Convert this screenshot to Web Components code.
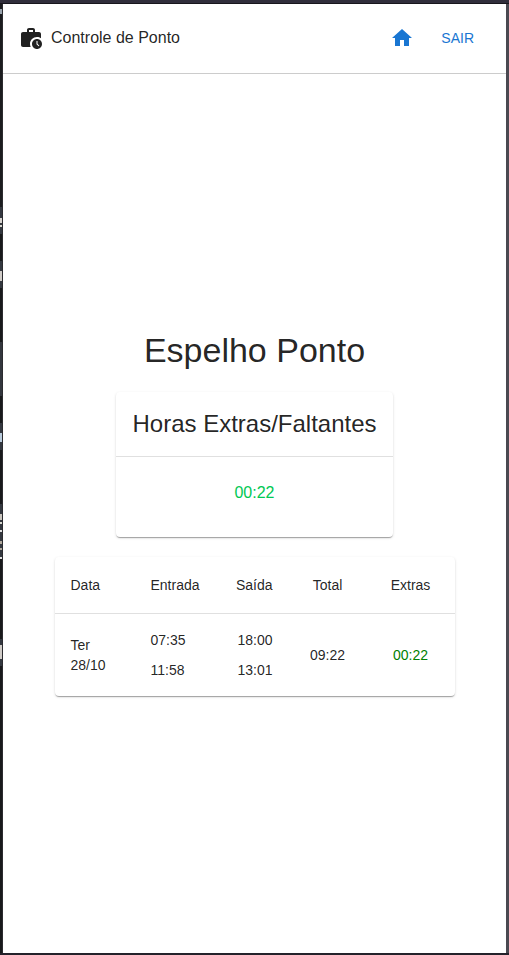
<!DOCTYPE html>
<html lang="pt-BR">
<head>
<meta charset="utf-8">
<meta name="viewport" content="width=device-width, initial-scale=1">
<title>Controle de Ponto</title>
<style>
  body {
    margin: 0;
    font-family: "Liberation Sans", Arial, sans-serif;
    font-size: 16px;
    line-height: 24px;
    color: rgba(0, 0, 0, 0.87);
  }
</style>
</head>
<body>
<window-frame>
  <app-header slot="header" heading="Controle de Ponto"></app-header>
  <time-sheet>
    <hours-card heading="Horas Extras/Faltantes">00:22</hours-card>
    <hours-table></hours-table>
  </time-sheet>
</window-frame>

<script>
const define = (name, markup, setup) => {
  const template = document.createElement("template");
  template.innerHTML = markup;
  customElements.define(name, class extends HTMLElement {
    constructor() {
      super();
      this.attachShadow({ mode: "open" }).append(template.content.cloneNode(true));
    }
    connectedCallback() {
      if (setup) setup(this, this.shadowRoot);
    }
  });
};

const setHeading = (host, root) => {
  root.querySelector(".heading").textContent = host.getAttribute("heading");
};

/* Paper surface shared by the summary and the table */
define("paper-surface", `
  <style>
    :host {
      display: block;
      box-sizing: border-box;
      background: #fff;
      border-radius: 4px;
      overflow: hidden;
      box-shadow: 0 2px 1px -1px rgba(0,0,0,.2), 0 1px 1px 0 rgba(0,0,0,.14), 0 1px 3px 0 rgba(0,0,0,.12);
    }
  </style>
  <slot></slot>`);

/* Window edges, with a sliver of the editor behind on the left */
define("window-frame", `
  <style>
    :host {
      display: grid;
      grid-template-columns: 3px 1fr 3px;
      grid-template-rows: 4px 1fr 2px;
      min-height: 100vh;
      background: #2d2b37;
    }
    .top { grid-column: 1 / -1; background: linear-gradient(#302e3b 3px, #17161c 3px); }
    .left {
      border-right: 1px solid #2b2b2f;
      background: linear-gradient(#1b1c1f 5px, #9aa4ae 5px 10px, #1b1c1f 10px 203px,
        #343840 203px 214px, #d8d4d0 214px 219px, #343840 219px 221px, #d8d8d0 221px 223px, #343840 223px 230px,
        #18191b 230px 257px, #343840 257px 267px, #d0ccc8 267px 277px, #343840 277px 284px,
        #18191b 284px 338px, #33363d 338px 392px, #18191b 392px 419px,
        #343840 419px 429px, #b9cbdc 429px 438px, #343840 438px 446px, #18191b 446px 500px,
        #343840 500px 510px, #c9c5bf 510px 516px, #343840 516px 518px, #d8d8d0 518px 520px,
        #343840 520px 526px, #e0e0e0 526px 528px, #343840 528px 537px, #b0a89d 537px 540px,
        #343840 540px 544px, #b0a89d 544px 546px, #343840 546px 553px, #e0e0e0 553px 555px,
        #18191b 555px 635px, #343840 635px 641px, #d0ccc8 641px 655px, #343840 655px 662px, #18191b 662px);
    }
    .right { background: #4a4951; }
    .bottom { grid-column: 1 / -1; background: #24222b; }
    .page { display: flex; flex-direction: column; min-width: 0; background: #fff; }
    main { flex: 1; display: grid; place-items: center; padding: 16px 16px 18px; }
  </style>
  <div class="top"></div>
  <div class="left"></div>
  <div class="page"><slot name="header"></slot><main><slot></slot></main></div>
  <div class="right"></div>
  <div class="bottom"></div>`);

define("app-header", `
  <style>
    :host { display: block; }
    header {
      display: flex;
      align-items: center;
      min-height: 67px;
      padding: 0 24px 2px 16px;
      border-bottom: 1px solid #ccc;
    }
    svg { display: block; width: 24px; height: 24px; fill: currentColor; }
    .brand { display: flex; align-items: center; gap: 8px; }
    nav { display: flex; align-items: center; gap: 11px; margin-left: auto; color: #1976d2; }
    a { display: block; padding: 8px; color: inherit; }
    button {
      font: inherit;
      font-size: 14px;
      line-height: 24px;
      min-width: 48px;
      padding: 6px 8px;
      border: 0;
      border-radius: 4px;
      background: none;
      color: inherit;
      cursor: pointer;
    }
  </style>
  <header>
    <div class="brand">
      <svg viewBox="0 0 24 24" aria-hidden="true">
        <path d="M18 11c1.49 0 2.87.47 4 1.26V8c0-1.11-.89-2-2-2h-4V4c0-1.11-.89-2-2-2h-4c-1.11 0-2 .89-2 2v2H4c-1.11 0-1.99.89-1.99 2L2 19c0 1.11.89 2 2 2h7.68c-.43-.91-.68-1.92-.68-3 0-3.87 3.13-7 7-7zm-8-7h4v2h-4V4z"/>
        <path d="M18 13c-2.76 0-5 2.24-5 5s2.24 5 5 5 5-2.24 5-5-2.24-5-5-5zm1.65 7.35L17.5 18.2V15h1v2.79l1.85 1.85-.7.71z"/>
      </svg>
      <span class="heading"></span>
    </div>
    <nav>
      <a href="#" aria-label="Início"><svg viewBox="0 0 24 24" aria-hidden="true"><path d="M10 20v-6h4v6h5v-8h3L12 3 2 12h3v8z"/></svg></a>
      <button type="button">SAIR</button>
    </nav>
  </header>`, setHeading);

define("time-sheet", `
  <style>
    :host { display: flex; flex-direction: column; align-items: center; gap: 20px; width: 100%; }
    h1 { margin: 0; padding-bottom: 2px; font-size: 34px; line-height: 40px; font-weight: 400; text-align: center; }
  </style>
  <h1>Espelho Ponto</h1>
  <slot></slot>`);

define("hours-card", `
  <style>
    :host { display: block; }
    h2 {
      margin: 0;
      padding: 16px;
      border-bottom: 1px solid #e0e0e0;
      font-size: 24px;
      line-height: 32px;
      font-weight: 400;
      text-align: center;
    }
    p { margin: 0; padding: 24px 16px 32px; text-align: center; color: #00c853; }
  </style>
  <paper-surface><h2 class="heading"></h2><p><slot></slot></p></paper-surface>`, setHeading);

define("hours-table", `
  <style>
    :host { display: block; width: 400px; max-width: 100%; }
    table { width: 100%; table-layout: fixed; border-collapse: separate; border-spacing: 0; font-size: 14px; line-height: 20px; }
    th, td { padding: 16px; font-weight: 400; text-align: left; vertical-align: middle; }
    th { line-height: 24px; border-bottom: 1px solid #e0e0e0; }
    .date { width: 20%; }
    .in { width: 21%; }
    .out { width: 17.5%; }
    .total { width: 19.5%; }
    .end { text-align: right; }
    .mid { text-align: center; }
    .times { display: grid; gap: 10px; }
    .extra { color: green; }
  </style>
  <paper-surface>
    <table>
      <colgroup><col class="date"><col class="in"><col class="out"><col class="total"><col></colgroup>
      <thead>
        <tr><th scope="col">Data</th><th scope="col">Entrada</th><th scope="col" class="end">Saída</th><th scope="col" class="mid">Total</th><th scope="col" class="mid">Extras</th></tr>
      </thead>
      <tbody>
        <tr>
          <td>Ter<br>28/10</td>
          <td><div class="times"><span>07:35</span><span>11:58</span></div></td>
          <td class="end"><div class="times"><span>18:00</span><span>13:01</span></div></td>
          <td class="mid">09:22</td>
          <td class="mid extra">00:22</td>
        </tr>
      </tbody>
    </table>
  </paper-surface>`);
</script>
</body>
</html>
